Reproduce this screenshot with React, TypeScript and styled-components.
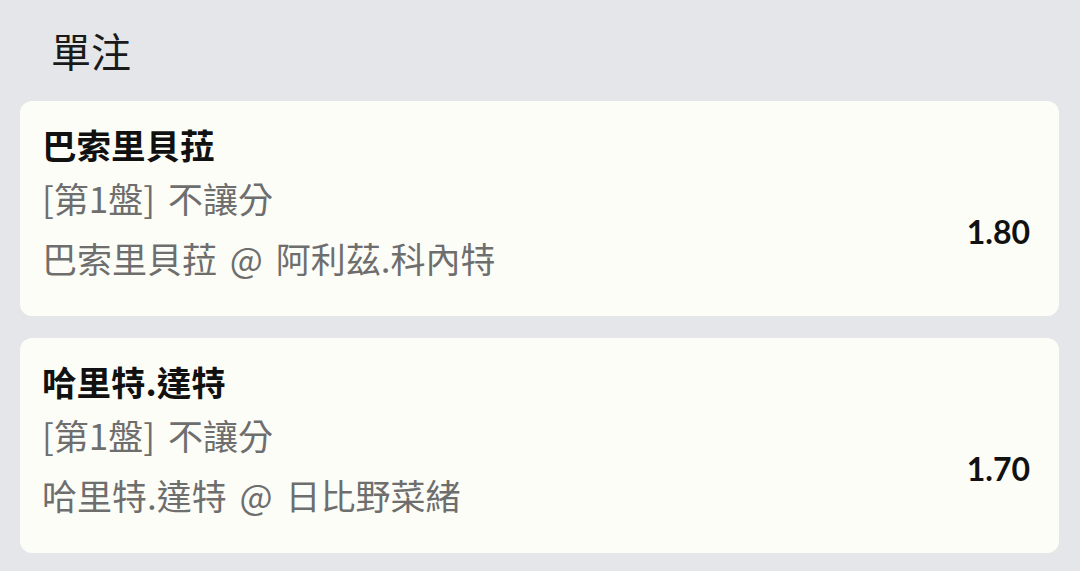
import React from "react";
import styled, { createGlobalStyle } from "styled-components";

const Global = createGlobalStyle`
  html, body { margin: 0; padding: 0; background: #e5e6e9; }
  body { font-family: "Noto Sans CJK TC", "Noto Sans", sans-serif; }
`;

const Page = styled.div`
  width: 1080px;
  height: 571px;
  box-sizing: border-box;
  padding: 25px 21px 0 20px;
  background: #e5e6e9;
  overflow: hidden;
`;

const Heading = styled.h1`
  margin: 0 0 26px 31px;
  font-size: 40px;
  line-height: 50px;
  font-weight: 400;
  color: #1a1a1a;
`;

const List = styled.div`
  display: flex;
  flex-direction: column;
  gap: 22px;
`;

const Card = styled.div`
  background: #fdfdf7;
  border-radius: 12px;
  padding: 17px 29px 30px 22px;
  display: flex;
  flex-direction: column;
`;

const Title = styled.div`
  font-size: 34.5px;
  line-height: 52px;
  font-weight: 700;
  color: #111;
`;

const Body = styled.div`
  display: flex;
  align-items: center;
  justify-content: space-between;
`;

const Details = styled.div`
  display: flex;
  flex-direction: column;
  gap: 4px;
`;

const Line = styled.div`
  font-size: 35px;
  line-height: 56px;
  word-spacing: 5px;
  color: #6e6e6e;
`;

const Odds = styled.div`
  font-family: Lato, sans-serif;
  font-size: 32px;
  font-weight: 700;
  color: #111;
  margin-top: 6px;
`;

const bets = [
  { title: "巴索里貝菈", market: "[第1盤] 不讓分", pick: "巴索里貝菈 @ 阿利茲.科內特", odds: "1.80" },
  { title: "哈里特.達特", market: "[第1盤] 不讓分", pick: "哈里特.達特 @ 日比野菜緒", odds: "1.70" },
];

export default function App() {
  return (
    <>
      <Global />
      <Page>
        <Heading>單注</Heading>
        <List>
          {bets.map((b) => (
            <Card key={b.title}>
              <Title>{b.title}</Title>
              <Body>
                <Details>
                  <Line>{b.market}</Line>
                  <Line>{b.pick}</Line>
                </Details>
                <Odds>{b.odds}</Odds>
              </Body>
            </Card>
          ))}
        </List>
      </Page>
    </>
  );
}
